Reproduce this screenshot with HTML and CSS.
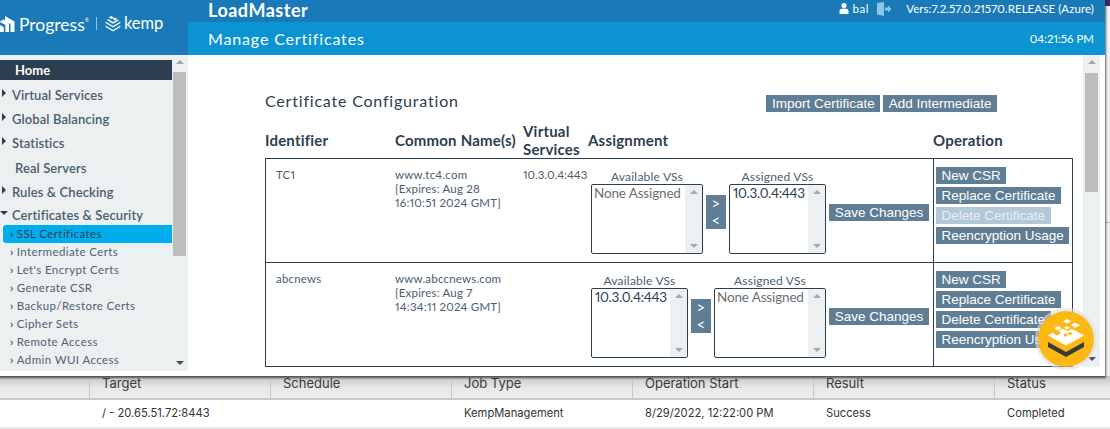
FILE: index.html
```html
<!DOCTYPE html>
<html lang="en">
<head>
    <meta charset="UTF-8">
    <meta name="viewport" content="width=device-width, initial-scale=1.0">
    <title>LoadMaster - Manage Certificates</title>
    <link rel="stylesheet" href="styles.css">
</head>
<body>
    <div class="top-row">
        <div class="window">
            <header class="header">
                <div class="brand">
                    <svg class="progress-mark" width="15" height="18" viewBox="0 0 15 18">
                        <path d="M5 1 L14.5 6.5 V17 H10.5 V9 L5 5.8 Z" fill="#fff"/>
                        <path d="M0 6.5 L3.4 4.6 L9 8 V17 H5.4 V10 L0 7 Z" fill="#fff"/>
                        <path d="M0 10 L3.8 12.2 V17 H0 Z" fill="#fff"/>
                    </svg>
                    <span class="brand-name">Progress<sup>®</sup></span>
                    <span class="brand-sep"></span>
                    <svg class="kemp-mark" width="16" height="17" viewBox="0 0 16 17">
                        <path d="M6 1 L9 2.6 L6.6 4 L3.8 2.4 Z M10 2.6 L12.4 4 L9.8 5.4 L7.6 4.1 Z" fill="#fff"/>
                        <path d="M3 4 L8 7 L13 4.4 L14 5.2 L8 8.8 L2 5 Z" fill="#fff"/>
                        <path d="M0.6 6.4 L8 11 L15.4 6.4 L15.4 8 L8 12.6 L0.6 8 Z" fill="#fff"/>
                        <path d="M0.6 10.4 L8 15 L15.4 10.4 L15.4 12 L8 16.6 L0.6 12 Z" fill="#fff"/>
                    </svg>
                    <span class="brand-kemp">kemp</span>
                </div>
                <div class="header-main">
                    <div class="top-bar">
                        <span class="product">LoadMaster</span>
                        <div class="top-info">
                            <svg class="user-icon" width="10" height="11" viewBox="0 0 10 11">
                                <circle cx="5" cy="2.6" r="2.5" fill="#fff"/>
                                <path d="M0.5 11 V8 C0.5 6 2.5 5.4 5 5.4 C7.5 5.4 9.5 6 9.5 8 V11 Z" fill="#fff"/>
                            </svg>
                            <span class="user-name">bal</span>
                            <svg class="logout-icon" width="15" height="14" viewBox="0 0 15 14">
                                <path d="M0 1 L7 0 V14 L0 12.6 Z" fill="#8cc6e8"/>
                                <path d="M8 5.6 H11 V3.4 L14.6 7 L11 10.6 V8.4 H8 Z" fill="#8cc6e8"/>
                            </svg>
                            <span class="version">Vers:7.2.57.0.21570.RELEASE (Azure)</span>
                        </div>
                    </div>
                    <div class="sub-bar">
                        <span class="page-title">Manage Certificates</span>
                        <span class="clock">04:21:56 PM</span>
                    </div>
                </div>
            </header>

            <div class="body">
                <nav class="sidebar">
                    <div class="menu">
                        <div class="menu-home">Home</div>
                        <div class="menu-item arrow">Virtual Services</div>
                        <div class="menu-item arrow">Global Balancing</div>
                        <div class="menu-item arrow">Statistics</div>
                        <div class="menu-item plain">Real Servers</div>
                        <div class="menu-item arrow">Rules &amp; Checking</div>
                        <div class="menu-item open">Certificates &amp; Security</div>
                        <div class="sub-item active">SSL Certificates</div>
                        <div class="sub-item">Intermediate Certs</div>
                        <div class="sub-item">Let's Encrypt Certs</div>
                        <div class="sub-item">Generate CSR</div>
                        <div class="sub-item">Backup/Restore Certs</div>
                        <div class="sub-item">Cipher Sets</div>
                        <div class="sub-item">Remote Access</div>
                        <div class="sub-item">Admin WUI Access</div>
                    </div>
                    <div class="scrollbar side-scroll">
                        <span class="sb-up"></span>
                        <span class="sb-thumb"></span>
                        <span class="sb-down"></span>
                    </div>
                </nav>

                <main class="content">
                    <div class="cert-page">
                        <div class="cert-top">
                            <h2>Certificate Configuration</h2>
                            <div class="cert-actions">
                                <button class="btn">Import Certificate</button>
                                <button class="btn">Add Intermediate</button>
                            </div>
                        </div>

                        <div class="cert-grid cert-head">
                            <div>Identifier</div>
                            <div>Common Name(s)</div>
                            <div>Virtual Services</div>
                            <div>Assignment</div>
                            <div>Operation</div>
                        </div>

                        <div class="cert-grid cert-row first">
                            <div class="cell-id">TC1</div>
                            <div class="cell-name">www.tc4.com<br>[Expires: Aug 28<br>16:10:51 2024 GMT]</div>
                            <div class="cell-vs">10.3.0.4:443</div>
                            <div class="assign">
                                <div class="vs-group wide">
                                    <label>Available VSs</label>
                                    <div class="vs-box">
                                        <span class="vs-text muted">None Assigned</span>
                                        <div class="scrollbar box-scroll"><span class="sb-up"></span><span class="sb-down"></span></div>
                                    </div>
                                </div>
                                <div class="move-btns"><span>&gt;</span><span>&lt;</span></div>
                                <div class="vs-group narrow">
                                    <label>Assigned VSs</label>
                                    <div class="vs-box">
                                        <span class="vs-text">10.3.0.4:443</span>
                                        <div class="scrollbar box-scroll"><span class="sb-up"></span><span class="sb-down"></span></div>
                                    </div>
                                </div>
                                <button class="btn save">Save Changes</button>
                            </div>
                            <div class="ops">
                                <button class="btn">New CSR</button>
                                <button class="btn">Replace Certificate</button>
                                <button class="btn disabled">Delete Certificate</button>
                                <button class="btn">Reencryption Usage</button>
                            </div>
                        </div>

                        <div class="cert-grid cert-row">
                            <div class="cell-id">abcnews</div>
                            <div class="cell-name">www.abccnews.com<br>[Expires: Aug 7<br>14:34:11 2024 GMT]</div>
                            <div class="cell-vs"></div>
                            <div class="assign">
                                <div class="vs-group narrow">
                                    <label>Available VSs</label>
                                    <div class="vs-box">
                                        <span class="vs-text">10.3.0.4:443</span>
                                        <div class="scrollbar box-scroll"><span class="sb-up"></span><span class="sb-down"></span></div>
                                    </div>
                                </div>
                                <div class="move-btns"><span>&gt;</span><span>&lt;</span></div>
                                <div class="vs-group wide">
                                    <label>Assigned VSs</label>
                                    <div class="vs-box">
                                        <span class="vs-text muted">None Assigned</span>
                                        <div class="scrollbar box-scroll"><span class="sb-up"></span><span class="sb-down"></span></div>
                                    </div>
                                </div>
                                <button class="btn save">Save Changes</button>
                            </div>
                            <div class="ops">
                                <button class="btn">New CSR</button>
                                <button class="btn">Replace Certificate</button>
                                <button class="btn">Delete Certificate</button>
                                <button class="btn">Reencryption Usage</button>
                            </div>
                        </div>
                    </div>

                    <div class="scrollbar main-scroll">
                        <span class="sb-up"></span>
                        <span class="sb-thumb"></span>
                        <span class="sb-down"></span>
                    </div>
                </main>
            </div>

            <div class="chat-badge">
                <svg width="56" height="56" viewBox="0 0 56 56">
                    <circle cx="28" cy="28" r="28" fill="#fdb913"/>
                    <g fill="#fff">
                        <path d="M29 8 L33 10.2 L29 12.4 L25 10.2 Z"/>
                        <path d="M37 11.5 L42 14.2 L37.5 16.8 L32.5 14 Z"/>
                        <path d="M20 15 L24 17.2 L20 19.4 L16 17.2 Z"/>
                        <path d="M29 15 L32 16.7 L29 18.4 L26 16.7 Z"/>
                        <path d="M38 20 L46 24.4 L28 34.4 L10 24.4 L14.5 21.8 L19 24.4 L23.5 21.8 L20.5 20.2 L25 17.8 L29.5 20.2 L33.5 18 Z"/>
                    </g>
                    <circle cx="27.5" cy="24" r="1.8" fill="#fdb913"/>
                    <path d="M32 21 L35 22.6 L32 24.2 L29 22.6 Z" fill="#fdb913"/>
                    <path d="M10 31 L28 41 L46 31 V36 L28 46 L10 36 Z" fill="#3a3a3a"/>
                </svg>
            </div>
        </div>
        <div class="backdrop-edge">
            <span class="edge-top"></span>
            <span class="edge-line"></span>
        </div>
    </div>

    <section class="jobs">
        <div class="jobs-head">
            <div class="jobs-spacer"></div>
            <div>Target</div>
            <div>Schedule</div>
            <div>Job Type</div>
            <div>Operation Start</div>
            <div>Result</div>
            <div>Status</div>
        </div>
        <div class="jobs-row">
            <div class="jobs-spacer"></div>
            <div>/ - 20.65.51.72:8443</div>
            <div></div>
            <div>KempManagement</div>
            <div>8/29/2022, 12:22:00 PM</div>
            <div>Success</div>
            <div>Completed</div>
        </div>
    </section>
</body>
</html>
```

FILE: styles.css
```css
html, body {
    margin: 0;
    padding: 0;
    height: 429px;
    overflow: hidden;
    background: #fff;
}
body {
    font-family: "Lato", "Noto Sans", sans-serif;
    font-variant-numeric: proportional-nums;
    color: #2c3e50;
}
.top-row {
    display: flex;
    height: 376px;
}
.window {
    position: relative;
    z-index: 2;
    width: 1105px;
    height: 376px;
    background: #fff;
    box-shadow: 0 1px 2px 1px rgba(40, 40, 40, 0.75);
}
.backdrop-edge {
    flex: 1;
    display: flex;
    flex-direction: column;
    background: #f2f2f2;
}
.edge-top {
    height: 6px;
    background: #3d2b63;
}
.edge-line {
    height: 1px;
    margin-top: 216px;
    background: #bbb;
}

/* header */
.header {
    display: flex;
    height: 55px;
    background: #1a7ab7;
    color: #fff;
}
.brand {
    box-sizing: border-box;
    width: 188px;
    height: 40px;
    display: flex;
    align-items: center;
    padding-top: 7px;
}
.progress-mark {
    flex: none;
}
.brand-name {
    margin-left: 4px;
    margin-top: -2px;
    font-size: 17.5px;
    line-height: 20px;
}
.brand-name sup {
    font-size: 5px;
    vertical-align: 9px;
}
.brand-sep {
    width: 1px;
    height: 13px;
    margin: 0 8px 0 7px;
    background: #8cc6e8;
}
.kemp-mark {
    flex: none;
}
.brand-kemp {
    margin-left: 3px;
    margin-top: -2px;
    font-size: 16.5px;
    line-height: 20px;
}
.header-main {
    flex: 1;
    display: flex;
    flex-direction: column;
}
.top-bar {
    height: 22px;
    display: flex;
    justify-content: space-between;
    padding: 0 11px 0 20px;
}
.product {
    font-size: 18px;
    font-weight: 700;
    line-height: 20px;
    letter-spacing: 0.5px;
}
.top-info {
    display: flex;
    align-items: center;
    height: 17px;
    font-size: 11.5px;
}
.user-name {
    margin-left: 4px;
    letter-spacing: 0.6px;
}
.logout-icon {
    margin: 0 14px 0 8px;
}
.version {
    letter-spacing: 0.07px;
}
.sub-bar {
    flex: 1;
    display: flex;
    justify-content: space-between;
    align-items: center;
    padding: 0 11px 0 20px;
    background: #0c93d2;
}
.page-title {
    font-size: 16px;
    letter-spacing: 0.85px;
}
.clock {
    font-size: 11.5px;
    letter-spacing: -0.02px;
}

/* sidebar */
.body {
    display: flex;
    height: 321px;
}
.sidebar {
    display: flex;
    width: 188px;
    height: 316px;
    background: #ecf0f1;
}
.menu {
    width: 172px;
    padding-top: 5px;
    color: #4a5e70;
}
.menu-home {
    height: 20px;
    line-height: 21px;
    padding-left: 15px;
    margin-bottom: 3px;
    background: #2c3e50;
    color: #fff;
    font-size: 13px;
    font-weight: 700;
}
.menu-item {
    position: relative;
    height: 24px;
    line-height: 24px;
    padding-left: 12px;
    font-size: 13px;
    font-weight: 600;
    letter-spacing: 0.1px;
}
.menu-item.plain {
    padding-left: 15px;
    margin-top: 1px;
}
.menu-item.open {
    height: 21px;
    line-height: 22px;
}
.menu-item.arrow::before {
    content: "";
    position: absolute;
    left: 2px;
    top: 6px;
    border-left: 4px solid #2c3e50;
    border-top: 4px solid transparent;
    border-bottom: 4px solid transparent;
}
.menu-item.open::before {
    content: "";
    position: absolute;
    left: 0;
    top: 7px;
    border-top: 4px solid #2c3e50;
    border-left: 4px solid transparent;
    border-right: 4px solid transparent;
}
.sub-item {
    height: 18px;
    line-height: 18px;
    padding-left: 10px;
    font-size: 11.5px;
    letter-spacing: 0.4px;
    color: #4f6172;
}
.sub-item::before {
    content: "›";
    margin-right: 3px;
    font-weight: 700;
}
.sub-item.active {
    margin-left: 3px;
    padding-left: 7px;
    background: #00aeef;
    border-radius: 3px 0 0 3px;
    color: #2c3e50;
}

/* scrollbars */
.scrollbar {
    position: relative;
    display: flex;
    flex-direction: column;
    background: #ecf0f1;
}
.sb-thumb {
    background: #bdbdbd;
}
.sb-up, .sb-down {
    position: absolute;
    left: 50%;
    margin-left: -4px;
    border-left: 4px solid transparent;
    border-right: 4px solid transparent;
}
.sb-up {
    top: 5px;
    border-bottom: 4px solid #a8a8a8;
}
.sb-down {
    bottom: 5px;
    border-top: 4px solid #a8a8a8;
}
.side-scroll {
    width: 16px;
    padding-top: 17px;
    box-sizing: border-box;
}
.side-scroll .sb-thumb {
    width: 13px;
    margin-left: 1px;
    height: 184px;
}
.side-scroll .sb-down {
    border-top-color: #4a4a5a;
    bottom: 6px;
}
.main-scroll {
    flex: none;
    width: 17px;
    height: 312px;
    margin-right: 5px;
    padding: 18px 0 0 2px;
    box-sizing: border-box;
}
.main-scroll .sb-thumb {
    width: 13px;
    height: 119px;
}
.main-scroll .sb-down {
    border-top-color: #4a4a5a;
    bottom: 6px;
}

/* certificate page */
.content {
    flex: 1;
    display: flex;
    justify-content: space-between;
    overflow: hidden;
}
.cert-page {
    width: 808px;
    margin-left: 77px;
}
.cert-top {
    display: flex;
    justify-content: space-between;
    height: 66px;
}
.cert-top h2 {
    margin: 36px 0 0;
    font-size: 16px;
    font-weight: 400;
    letter-spacing: 0.8px;
    line-height: 20px;
    color: #2c3e50;
}
.cert-actions {
    display: flex;
    gap: 3px;
    margin: 40px 76px 0 0;
}
.btn {
    height: 17px;
    padding: 0 5.5px;
    border: none;
    background: #5f7d95;
    color: #fff;
    font-family: "Liberation Sans", Arial, sans-serif;
    font-size: 13.5px;
    line-height: 17px;
    white-space: nowrap;
    cursor: pointer;
}
.btn.disabled {
    background: #b3c8d7;
    color: #e8eef3;
}
.cert-grid {
    display: grid;
    grid-template-columns: 130px 128px 65px 345px 140px;
}
.cert-head {
    height: 37px;
    align-items: center;
    font-size: 15px;
    font-weight: 700;
    line-height: 18px;
    letter-spacing: 0.2px;
}
.cert-row {
    box-sizing: border-box;
    height: 104px;
    border: 1px solid #2c3e50;
    border-top: none;
    font-size: 11.5px;
    line-height: 14px;
    letter-spacing: 0.2px;
    color: #4a5e70;
}
.cert-row.first {
    height: 105px;
    border-top: 1px solid #2c3e50;
}
.cell-id {
    padding: 9px 0 0 10px;
}
.cell-name {
    padding-top: 9px;
    margin-left: -1px;
}
.cell-vs {
    padding-top: 9px;
    margin-left: -1px;
    letter-spacing: 0;
}
.assign {
    display: flex;
    gap: 3px;
    align-items: flex-start;
    padding: 10px 0 0 3px;
    margin-left: -1px;
}
.vs-group {
    display: flex;
    flex-direction: column;
    align-items: center;
}
.vs-group label {
    height: 15px;
    line-height: 15px;
    font-size: 12px;
    white-space: nowrap;
}
.vs-group.wide {
    width: 112px;
}
.vs-group.narrow {
    width: 97px;
}
.vs-box {
    box-sizing: border-box;
    display: flex;
    justify-content: space-between;
    width: 100%;
    height: 70px;
    border: 1px solid #2c3e50;
    border-radius: 2px;
    overflow: hidden;
}
.vs-text {
    padding-left: 3px;
    font-size: 13.5px;
    line-height: 16px;
    letter-spacing: -0.3px;
    white-space: nowrap;
    color: #2c3e50;
}
.vs-text.muted {
    padding-left: 2px;
    letter-spacing: -0.15px;
    color: #6f6f6f;
}
.box-scroll {
    flex: none;
    width: 17px;
}
.move-btns {
    display: flex;
    flex-direction: column;
    justify-content: center;
    flex: none;
    width: 20px;
    height: 34px;
    margin-top: 26px;
    background: #5f7d95;
    color: #fff;
    font-size: 15px;
    line-height: 17px;
    text-align: center;
}
.save {
    width: 100px;
    margin-top: 35px;
    padding: 0;
}
.ops {
    display: flex;
    flex-direction: column;
    align-items: flex-start;
    gap: 3px;
    padding: 8px 0 0 2px;
    margin-left: -1px;
    border-left: 1px solid #2c3e50;
}

/* yellow chat badge */
.chat-badge {
    position: absolute;
    left: 1038px;
    top: 311px;
    width: 56px;
    height: 56px;
    border-radius: 50%;
    box-shadow: 0 0 0 3px rgba(220, 222, 228, 0.6);
}
.chat-badge svg {
    display: block;
}

/* job table behind the window */
.jobs {
    font-family: "Inter", "Liberation Sans", sans-serif;
    font-size: 11.2px;
    color: #333;
}
.jobs-head, .jobs-row {
    display: grid;
    grid-template-columns: 89px repeat(5, 181px) 116px;
}
.jobs-head {
    height: 22px;
    border-bottom: 2px solid #c9c9c9;
    background: linear-gradient(#c6c6c6, #e8e8e8 55%, #eeeeee);
    font-size: 13px;
    line-height: 14px;
    color: #3a3a3a;
}
.jobs-head > div {
    padding: 0 0 8px 12px;
    border-left: 1px solid #c8c8c8;
    height: 14px;
}
.jobs-head > .jobs-spacer {
    border-left: none;
}
.jobs-row {
    height: 27px;
    line-height: 27px;
    border-bottom: 2px solid #e6e6e6;
}
.jobs-row > div {
    padding-left: 13px;
    white-space: nowrap;
}
```
